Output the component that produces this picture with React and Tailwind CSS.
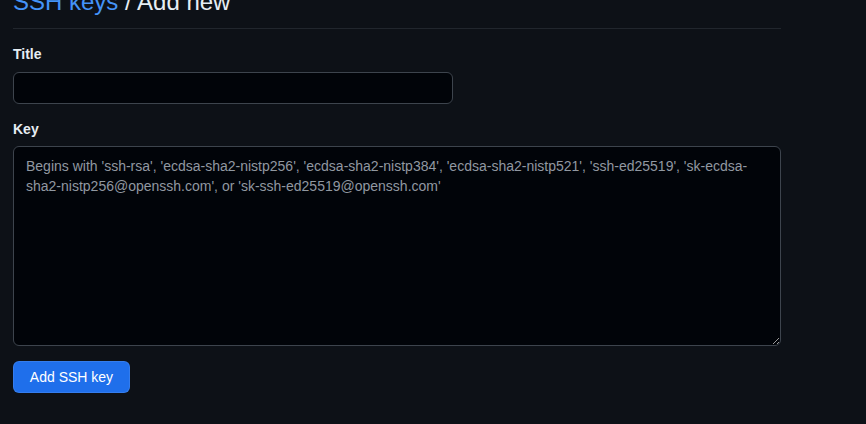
import React, {useState} from "react";

function App(){

    // Form State
    const [title, setTitle] = useState("");
    const [key, setKey] = useState("");

    return(
        <div className="bg-[#0d1117] min-h-screen h-[424px] overflow-hidden font-['Liberation_Sans',Arial,sans-serif]">
            <div className="w-[768px] ml-[13px]">
                {/*  Heading  */}
                <div className="mt-[-16px] pb-2 border-b border-[#21262d]">
                    <h2 className="text-[24px] leading-[36px] font-normal text-[#e6edf3]">
                        <a href="#" className="text-[#4493f8]">SSH keys</a> / Add new
                    </h2>
                </div>

                {/*  Title  */}
                <div className="mt-[15px]">
                    <label className="block text-[14px] leading-5 font-bold text-[#e6edf3] mb-2">Title</label>
                    <input
                        type="text"
                        value={title}
                        onChange={(e)=>setTitle(e.target.value)}
                        className="block w-[440px] h-8 bg-[#010409] border border-[#3d444d] rounded-md px-3 text-[14px] text-[#e6edf3] outline-none"
                    />
                </div>

                {/*  Key  */}
                <div className="mt-[15px]">
                    <label className="block text-[14px] leading-5 font-bold text-[#e6edf3] mb-[7px]">Key</label>
                    <textarea
                        value={key}
                        onChange={(e)=>setKey(e.target.value)}
                        placeholder="Begins with 'ssh-rsa', 'ecdsa-sha2-nistp256', 'ecdsa-sha2-nistp384', 'ecdsa-sha2-nistp521', 'ssh-ed25519', 'sk-ecdsa-sha2-nistp256@openssh.com', or 'sk-ssh-ed25519@openssh.com'"
                        className="block w-[768px] h-[200px] bg-[#010409] border border-[#3d444d] rounded-md px-3 py-[9px] text-[14px] leading-5 text-[#e6edf3] placeholder:text-[#9198a1] outline-none"
                    />
                </div>

                {/*  Button  */}
                <button type="submit" className="mt-[15px] h-8 w-[117px] bg-[#1f6feb] hover:bg-[#2a7aef] text-white text-[14px] rounded-md border border-[#ffffff1a] cursor-pointer">Add SSH key</button>
            </div>
        </div>
    )
}

export default App;
